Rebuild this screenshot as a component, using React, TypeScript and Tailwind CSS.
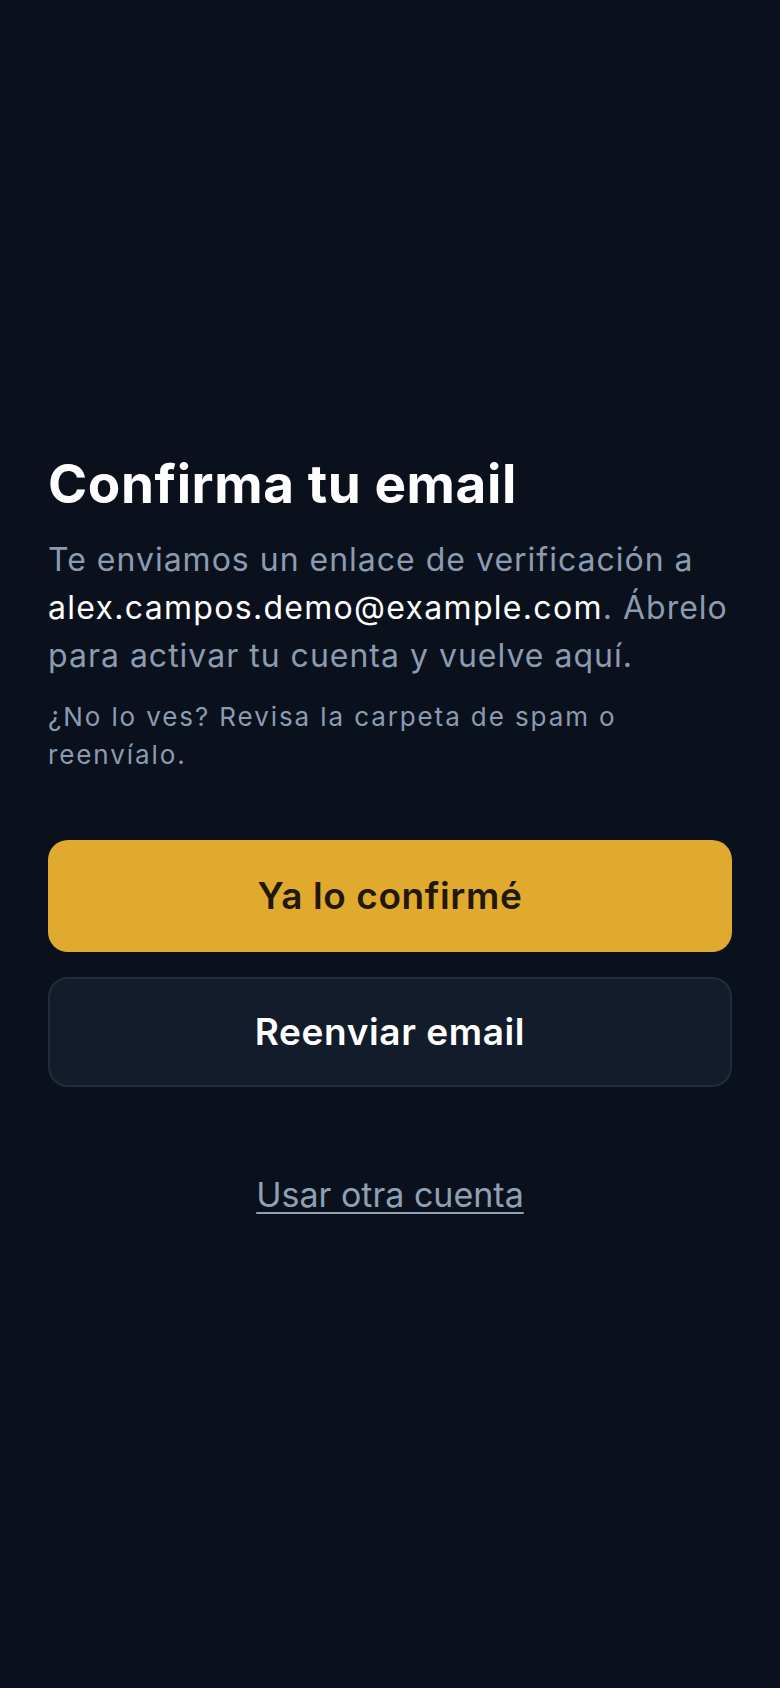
import React from 'react';

export default function App() {
  return (
    <div
      className="min-h-screen w-full bg-[#0a111c] flex flex-col justify-center px-12 pb-[20px]"
      style={{ fontFamily: 'Inter, "Noto Sans", sans-serif' }}
    >
      <h1 className="text-[53px] leading-[60px] font-bold text-white tracking-[0.6px]">
        Confirma tu email
      </h1>

      <p className="mt-[22px] text-[32px] leading-[48px] text-[#8c9bb0] tracking-[1px]">
        Te enviamos un enlace de verificación a{' '}
        <span className="text-white tracking-[1.3px]">alex.campos.demo@example.com</span>. Ábrelo para activar tu
        cuenta y vuelve aquí.
      </p>

      <p className="mt-[18px] text-[26px] leading-[38px] text-[#8c9bb0] tracking-[1.9px]">
        ¿No lo ves? Revisa la carpeta de spam o reenvíalo.
      </p>

      <div className="mt-[66px] flex flex-col gap-[25px]">
        {/* primary action */}
        <button className="h-[112px] w-full rounded-[20px] bg-[#e0aa2f] text-[#21170a] text-[37px] font-semibold tracking-[0.6px]">
          Ya lo confirmé
        </button>

        {/* secondary action */}
        <button className="h-[110px] w-full rounded-[20px] bg-[#131c2b] border-2 border-[#222c3b] text-white text-[37px] font-semibold tracking-[0.6px]">
          Reenviar email
        </button>
      </div>

      <div className="mt-[88px] flex justify-center">
        <a href="#" className="text-[34px] leading-[40px] text-[#8fa0b5] underline underline-offset-[5px] decoration-2">
          Usar otra cuenta
        </a>
      </div>
    </div>
  );
}
